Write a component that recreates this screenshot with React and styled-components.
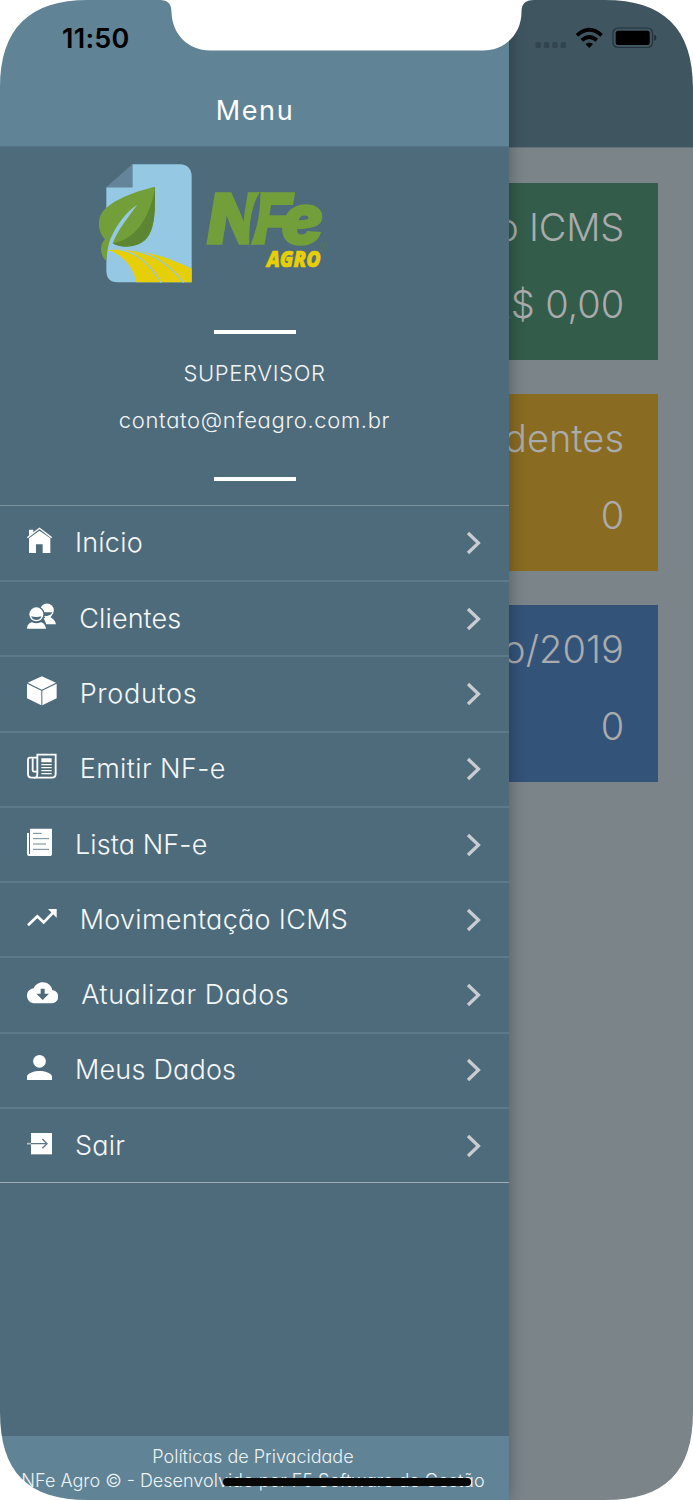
import React from "react"
import styled, { createGlobalStyle } from "styled-components"

const GlobalStyle = createGlobalStyle`
  * {
    box-sizing: border-box;
  }
  body {
    margin: 0;
    background: #fff;
    font-family: Inter, "Liberation Sans", sans-serif;
    font-feature-settings: "cv11";
  }
`

const Screen = styled.div`
  position: relative;
  width: 693px;
  height: 1500px;
  overflow: hidden;
  background: #7b8589;
`

const PageHeader = styled.header`
  height: 148px;
  background: #3f5661;
  border-bottom: 1px solid #64727a;
`

const CardList = styled.main`
  display: flex;
  flex-direction: column;
  gap: 34px;
  padding: 35px;
`

const Card = styled.section`
  display: flex;
  flex-direction: column;
  align-items: flex-end;
  height: 177px;
  padding: 15px 34px 0 0;
  background: ${(p) => p.$color};
  color: #a9abac;
  font-size: 38px;
  font-weight: 300;
  line-height: 58px;
`

const CardTitle = styled.span`
  letter-spacing: ${(p) => p.$spacing || 0}px;
`

const CardValue = styled.span`
  margin-top: 19px;
  letter-spacing: -0.1px;
`

const Drawer = styled.aside`
  position: absolute;
  top: 0;
  left: 0;
  display: flex;
  flex-direction: column;
  width: 509px;
  height: 100%;
  background: #4e6b7b;
  box-shadow: 0 0 16px rgba(0, 0, 0, 0.32);
  color: #fff;
`

const DrawerHeader = styled.header`
  display: flex;
  justify-content: center;
  height: 147px;
  padding: 94px 0 0 1px;
  background: #608395;
  border-bottom: 1px solid #547384;
  font-size: 27px;
  line-height: 34px;
  letter-spacing: 1.6px;
`

const Profile = styled.section`
  display: flex;
  flex-direction: column;
  align-items: center;
  height: 358px;
  padding-top: 17px;
  color: #f1f4f6;
  font-size: 22px;
  font-weight: 300;
  line-height: 30px;
`

const Brand = styled.div`
  align-self: flex-start;
  height: 120px;
  margin: 0 0 46px 99px;
`

const Divider = styled.hr`
  flex: none;
  width: 82px;
  height: 3.5px;
  margin: 0;
  border: 0;
  background: #fff;
`

const UserName = styled.span`
  margin-top: 24.5px;
  letter-spacing: 0.65px;
`

const UserEmail = styled.span`
  margin: 17px 0 42px;
  letter-spacing: 0.67px;
`

const MenuList = styled.nav`
  border-top: 1.5px solid #7d93a0;
  border-bottom: 1px solid #a0adb5;
`

const MenuItem = styled.a`
  display: flex;
  align-items: center;
  height: 75.3px;
  padding: 0 28px 0 27px;
  &:first-child {
    height: 74px;
  }
  & + & {
    border-top: 2px solid #5e7987;
  }
`

const Label = styled.span`
  flex: 1;
  margin-left: 23px;
  color: #f4f7f8;
  font-size: 27px;
  font-weight: 300;
  line-height: 36px;
  letter-spacing: ${(p) => p.$spacing}px;
`

const Footer = styled.footer`
  display: flex;
  flex-direction: column;
  align-items: center;
  height: 64px;
  margin-top: auto;
  padding: 9px 3px 0 0;
  background: #608395;
  color: #eef3f5;
  font-size: 18px;
  font-weight: 300;
  line-height: 23.5px;
  white-space: nowrap;
`

const HomeIndicator = styled.div`
  position: absolute;
  left: 223px;
  bottom: 14px;
  width: 248px;
  height: 8px;
  border-radius: 4px;
  background: #080808;
`

const StatusBar = styled.div`
  position: absolute;
  top: 0;
  left: 0;
  display: flex;
  align-items: center;
  justify-content: space-between;
  width: 100%;
  height: 76px;
  padding: 0 36px 0 62px;
  color: #000;
  font-size: 27px;
  font-weight: 600;
  letter-spacing: 0.3px;
`

const Bezel = styled.svg`
  position: absolute;
  top: 0;
  left: 0;
`

const Svg = styled.svg`
  display: block;
  flex: none;
`

const BG = "#4e6b7b"

// icons are drawn at 3x, w is the drawn width
function Icon({ w, children }) {
  return (
    <Svg width={w / 3} height="36" viewBox={`0 0 ${w} 108`} fill="#fff">
      {children}
    </Svg>
  )
}

const HomeIcon = () => (
  <Icon w={75}>
    <path d="M6 31V14h13v8L6 33z" />
    <path d="M1 38 37.500 10 74 38" fill="none" stroke="#fff" strokeWidth="4" />
    <path d="M6 40 37.500 17 70 40V84H47V58H27v26H6z" />
  </Icon>
)

const ClientsIcon = () => (
  <Icon w={88}>
    <circle cx="60" cy="28" r="20.500" />
    <path d="M50 51 72 49c1 3 13 7 15 21H58z" />
    <path d="M48 34h28c-3 8-8 10-14 11H50z" fill={BG} />
    <path d="M54 44c8 3 17-1 21-8-1 8-3 13-8 17l-13 4z" />
    <circle cx="28" cy="40" r="25" fill={BG} />
    <circle cx="28" cy="40" r="21" />
    <path d="M13 46c9 3 21 3 30 0-1 8-8 11-15 11s-14-3-15-11z" fill={BG} />
    <path d="M0 83c1-13 9-18 15-19 8 4 18 4 26 0 7 1 15 7 16 19z" />
  </Icon>
)

const BoxIcon = () => (
  <Icon w={89}>
    <path d="M44.500 1 87 20 44.500 41 2 20zM0 23l43 21v44L0 67zM46 44l43-21v44L46 88z" />
  </Icon>
)

const NewsIcon = () => (
  <Icon w={89}>
    <g fill="none" stroke="#fff" strokeWidth="5.500">
      <path d="M31 20H9q-6 0-6 6v43q0 11 11 11h61q11 0 11-11V11H31v58q0 11-10 12" />
      <path d="M17 22v36q0 4 5 4h9" />
    </g>
    <path d="M43 22h31v12H43zM43 39h31v4H43zM43 48h31v4H43zM43 57h31v4H43zM43 66h31v4H43z" />
  </Icon>
)

const ListIcon = () => (
  <Icon w={75}>
    <path d="M0 18h6v63h3V5h66v77q0 5-5 5H6q-6 0-6-6z" />
    <path d="M18 19h26M18 35h48M18 51h39M18 67h48" stroke="#6c8695" strokeWidth="3" />
  </Icon>
)

const TrendIcon = () => (
  <Icon w={89}>
    <path d="M3 70 31 43l19 18 30-31" fill="none" stroke="#fff" strokeWidth="8" />
    <path d="M63 21h26v26z" />
  </Icon>
)

const CloudIcon = () => (
  <Icon w={94}>
    <path d="M24 79C10 79 0 69 0 56c0-12 9-21 20-22C25 23 35 16 47 16c15 0 27 10 29 24 10 0 18 9 18 19 0 11-9 20-20 20z" />
    <path d="M41 35h12v15h13L47 69 28 50h13z" fill={BG} />
  </Icon>
)

const PersonIcon = () => (
  <Icon w={75}>
    <circle cx="37.500" cy="28" r="19" />
    <path d="M0 84V74c0-11 24-17 37.500-17S75 63 75 74v10z" />
  </Icon>
)

const ExitIcon = () => (
  <Icon w={75}>
    <path d="M12 15h63v64H12z" />
    <path d="M0 47h12" stroke="#b4c1c9" strokeWidth="5" />
    <path d="M12 47h48M46 33l14 14-14 14" fill="none" stroke="#5d7888" strokeWidth="4" />
  </Icon>
)

const Logo = () => (
  <Svg width="230" height="120" viewBox="57 42 690 360">
    <path d="M157 43h143q35 2 35 37v317H112q-33-2-33-35V112h78z" fill="#95c8e3" />
    <path d="M79 112 157 43v69z" fill="#648599" />
    <path
      d="M225 110C175 122 105 145 72 180c-25 28-17 68 3 88-15 14-18 45 4 65 2-24 4-44 13-68 17-40 45-78 80-101-27 36-58 75-74 116 22 14 77 15 102-15 28-35 25-95 25-155z"
      fill="#739f3a"
    />
    <path d="M225 110c-10 75-50 157-127 170 22 16 77 15 102-15 28-35 25-95 25-155z" fill="#5c8631" />
    <path d="M84 300c106-7 186 25 251 56v41H169c-9-47-40-82-85-97z" fill="#e7cf08" />
    <g fill="none" stroke="#95c8e3" strokeWidth="4">
      <path d="M118 299c54 8 97 50 125 99" />
      <path d="M149 299c70 10 122 45 162 99" />
    </g>
    <text
      y="281"
      x="382 510 604"
      fill="#739f3a"
      stroke="#739f3a"
      strokeWidth="5"
      fontFamily="Inter"
      fontSize="209"
      fontWeight="900"
      fontStyle="italic"
    >
      NFe
    </text>
    <path d="M541 124c-27 42-35 100-33 161h4c17-46 30-92 29-161z" fill={BG} />
    <text
      x="560"
      y="352"
      fill="#e7cf08"
      stroke="#e7cf08"
      strokeWidth="2"
      fontFamily="Open Sans"
      fontSize="67"
      fontWeight="800"
      fontStyle="italic"
      textLength="162"
      lengthAdjust="spacingAndGlyphs"
    >
      AGRO
    </text>
    <circle cx="732" cy="290" r="11" fill="none" stroke="#58803f" strokeWidth="1.500" />
    <text x="728" y="295" fill="#58803f" fontFamily="Inter" fontSize="13">
      R
    </text>
  </Svg>
)

const Chevron = () => (
  <Svg width="15" height="24" viewBox="0 0 15 24" fill="none" stroke="#c9cdd1" strokeWidth="3.200">
    <path d="M2 2l10.500 10L2 22" />
  </Svg>
)

const Signal = () => (
  <Svg width="122" height="26" viewBox="535 25 122 26">
    <g fill="#32454e">
      <rect x="535.500" y="42" width="5.500" height="6" rx="1.500" />
      <rect x="543.800" y="42" width="5.500" height="6" rx="1.500" />
      <rect x="552.200" y="42" width="5.500" height="6" rx="1.500" />
      <rect x="560.600" y="42" width="5.500" height="6" rx="1.500" />
    </g>
    <g fill="none" stroke="#000" strokeWidth="3.800">
      <path d="M577 35.300q12.300-11 24.600 0" />
      <path d="M581.800 40.200q7.500-6.500 15 0" />
    </g>
    <path d="M585.500 44q3.800-3.200 7.600 0l-3.800 4z" />
    <rect x="613" y="28" width="39.500" height="19.500" rx="5" fill="none" stroke="#24333b" strokeWidth="1.200" />
    <rect x="615.700" y="30.700" width="34" height="14.200" rx="2.500" />
    <path d="M654 34.500q2.500 1 2.500 3.300t-2.500 3.300z" fill="#24333b" />
  </Svg>
)

const menu = [
  { label: "Início", icon: HomeIcon, spacing: 0.2 },
  { label: "Clientes", icon: ClientsIcon, spacing: 0.1 },
  { label: "Produtos", icon: BoxIcon, spacing: 0.7 },
  { label: "Emitir NF-e", icon: NewsIcon, spacing: 0.4 },
  { label: "Lista NF-e", icon: ListIcon, spacing: 0.1 },
  { label: "Movimentação ICMS", icon: TrendIcon, spacing: 0.3 },
  { label: "Atualizar Dados", icon: CloudIcon, spacing: 0.5 },
  { label: "Meus Dados", icon: PersonIcon, spacing: 0.2 },
  { label: "Sair", icon: ExitIcon, spacing: 0.2 },
]

const cards = [
  { title: "Saldo ICMS", value: "R$ 0,00", color: "#335c4b", spacing: -0.2 },
  { title: "Pendentes", value: "0", color: "#896c22", spacing: 0 },
  { title: "Junho/2019", value: "0", color: "#345379", spacing: 0.1 },
]

export default function App() {
  return (
    <Screen>
      <GlobalStyle />
      <PageHeader />
      <CardList>
        {cards.map((card) => (
          <Card key={card.title} $color={card.color}>
            <CardTitle $spacing={card.spacing}>{card.title}</CardTitle>
            <CardValue>{card.value}</CardValue>
          </Card>
        ))}
      </CardList>
      <Drawer>
        <DrawerHeader>Menu</DrawerHeader>
        <Profile>
          <Brand>
            <Logo />
          </Brand>
          <Divider />
          <UserName>SUPERVISOR</UserName>
          <UserEmail>contato@nfeagro.com.br</UserEmail>
          <Divider />
        </Profile>
        <MenuList>
          {menu.map(({ label, icon: ItemIcon, spacing }) => (
            <MenuItem key={label}>
              <ItemIcon />
              <Label $spacing={spacing}>{label}</Label>
              <Chevron />
            </MenuItem>
          ))}
        </MenuList>
        <Footer>
          <span>Políticas de Privacidade</span>
          <span>NFe Agro © - Desenvolvido por F5 Software de Gestão</span>
        </Footer>
      </Drawer>
      <StatusBar>
        <span>11:50</span>
        <Signal />
      </StatusBar>
      <HomeIndicator />
      <Bezel width="693" height="1500" viewBox="0 0 693 1500" fill="#fff">
        <path d="M0 0H88C30 0 0 28 0 88zM693 0H605C663 0 693 28 693 88zM0 1500V1412C0 1472 28 1500 88 1500zM693 1500V1412C693 1472 665 1500 605 1500z" />
        <path d="M160 0c8 0 11.500 4 11.500 12C172 34 188 50.500 210 50.500H483C505 50.500 521.500 34 521.500 12 521.500 4 525 0 534 0z" />
      </Bezel>
    </Screen>
  )
}
